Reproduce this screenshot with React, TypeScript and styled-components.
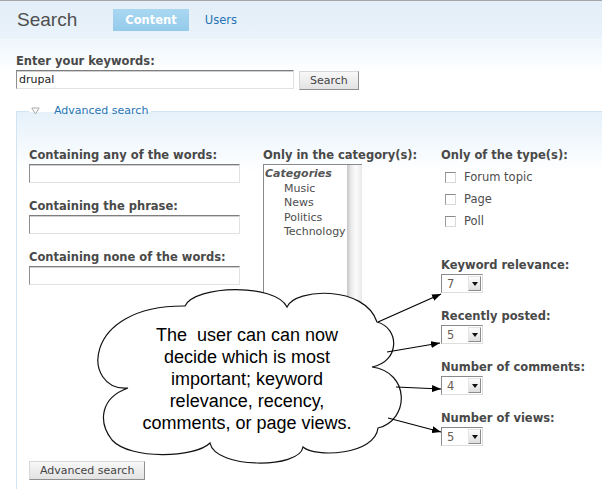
import React from 'react';
import styled, { createGlobalStyle, css } from 'styled-components';

const GlobalStyle = createGlobalStyle`
  html, body {
    margin: 0;
    padding: 0;
    background: #fff;
  }

  body {
    font-family: "DejaVu Sans", Verdana, sans-serif;
    overflow: hidden;
  }
`;

const Page = styled.div`
  position: relative;
  width: 602px;
  height: 489px;
  overflow: hidden;
  background: #fff;
  color: #494949;
`;

const Header = styled.header`
  display: flex;
  align-items: center;
  height: 38px;
  padding-left: 17px;
  border-top: 1px solid #a5a5a5;
  border-bottom: 1px solid #f4f9fd;
  background: linear-gradient(#e3eef8, #eaf3fb);
`;

const Title = styled.h1`
  margin: 0 36px 0 0;
  font: normal 19px/22px "Liberation Sans", Arial, sans-serif;
  color: #4f4f4f;
`;

const Tab = styled.a<{ $active?: boolean }>`
  display: block;
  height: 22px;
  line-height: 22px;
  padding: 0 12px;
  margin-right: 4px;
  font-size: 11.5px;
  text-decoration: none;

  ${(p) =>
    p.$active
      ? css`
          background: linear-gradient(#a9d7f1, #94cbeb);
          color: #fff;
          font-weight: bold;
        `
      : css`
          color: #2774b5;
        `}
`;

const SearchForm = styled.div`
  padding: 14px 0 0 16px;
  background: linear-gradient(#eef6fc, #fff 32px);
`;

const Label = styled.div`
  font-size: 11.5px;
  line-height: 14px;
  font-weight: bold;
  color: #494949;
  white-space: nowrap;
  margin-bottom: 2px;
`;

const Field = styled.div`
  display: flex;
  flex-direction: column;
  align-items: flex-start;
  margin-bottom: 16px;
`;

const KeywordRow = styled.div`
  display: flex;
  align-items: flex-start;
  gap: 5px;
`;

const TextInput = styled.input<{ $width: number }>`
  box-sizing: border-box;
  width: ${(p) => p.$width}px;
  height: 19px;
  margin: 0;
  padding: 0 2px;
  border: 1px solid #e2e2e2;
  border-top-color: #7e7e7e;
  border-left-color: #8e8e8e;
  box-shadow: inset 0 1px 0 #cfcfcf;
  background: #fff;
  font: 11px "DejaVu Sans", Verdana, sans-serif;
  color: #222;
  outline: none;
`;

const Button = styled.button`
  box-sizing: border-box;
  height: 19px;
  padding: 0 10px;
  margin: 1px 0 0;
  border: 1px solid #d8d8d8;
  border-right-color: #8f8f8f;
  border-bottom-color: #8f8f8f;
  background: linear-gradient(#f8f8f8, #e2e2e2);
  font: 11px/17px "DejaVu Sans", Verdana, sans-serif;
  color: #444;
`;

const Fieldset = styled.fieldset`
  margin: 14px 0 0 16px;
  padding: 30px 0 30px 12px;
  min-width: 0;
  border: 0;
  border-top: 1px solid #d2e4f2;
  border-left: 1px solid #d2e4f2;
  background: linear-gradient(#e5f1fa, #fff 60px);
`;

const Legend = styled.legend`
  display: flex;
  align-items: center;
  gap: 14px;
  padding: 0 3px 0 2px;
  font-size: 11px;
  line-height: 14px;
  color: #2774b5;
`;

const Columns = styled.div`
  display: grid;
  grid-template-columns: 234px 178px 1fr;
  align-items: start;
`;

const Column = styled.div`
  display: flex;
  flex-direction: column;
  align-items: flex-start;
`;

const ListBox = styled.div`
  box-sizing: border-box;
  display: flex;
  width: 99px;
  height: 170px;
  border-top: 1px solid #8a8a8a;
  border-left: 1px solid #8a8a8a;
  background: #fff;
`;

const ListOptions = styled.div`
  flex: 1;
  padding-top: 2px;
  font-size: 11px;
  line-height: 14.5px;
  color: #4d4d4d;
  overflow: hidden;
  white-space: nowrap;
`;

const ListOption = styled.div<{ $group?: boolean }>`
  padding-left: ${(p) => (p.$group ? 1 : 20)}px;
  ${(p) =>
    p.$group &&
    css`
      font-style: italic;
      font-weight: bold;
      color: #555;
    `}
`;

const ScrollTrack = styled.div`
  width: 15px;
  flex: none;
  background: linear-gradient(to right, #c6c6c6, #ececec 30%, #fbfbfb 60%, #e9e9e9);
`;

const CheckList = styled.div`
  display: flex;
  flex-direction: column;
  margin: 2px 0 26px;
`;

const CheckRow = styled.label`
  display: flex;
  align-items: center;
  gap: 8px;
  height: 22px;
  padding-left: 4px;
  font-size: 11.5px;
  color: #4d4d4d;
`;

const CheckBox = styled.span`
  box-sizing: border-box;
  width: 11px;
  height: 11px;
  border: 1px solid #d9d9d9;
  border-top-color: #8a8a8a;
  border-left-color: #9a9a9a;
  background: #fff;
`;

const Select = styled.div`
  box-sizing: border-box;
  display: flex;
  align-items: center;
  justify-content: space-between;
  width: 42px;
  height: 19px;
  padding-left: 5px;
  border: 1px solid #dedede;
  border-top-color: #8a8a8a;
  border-left-color: #8a8a8a;
  background: #fff;
  font-size: 11.5px;
  color: #6b5c50;
`;

const SelectButton = styled.span`
  box-sizing: border-box;
  display: flex;
  align-items: center;
  justify-content: center;
  width: 13px;
  height: 15px;
  margin-right: 1px;
  border: 1px solid #e4e4e4;
  border-right-color: #8c8c8c;
  border-bottom-color: #8c8c8c;
  background: linear-gradient(#fdfdfd, #dedede);

  &::after {
    content: '';
    border-left: 3.5px solid transparent;
    border-right: 3.5px solid transparent;
    border-top: 4px solid #111;
  }
`;

const ButtonRow = styled.div`
  margin-top: -3px;
`;

const Overlay = styled.svg`
  position: absolute;
  top: 0;
  left: 0;
  pointer-events: none;
`;

const CloudText = styled.div`
  position: absolute;
  left: 127px;
  top: 324px;
  width: 240px;
  font: 18px/22px "Liberation Sans", Arial, Helvetica, sans-serif;
  color: #000;
  text-align: center;
`;

const CloudLine = styled.div`
  white-space: pre;
`;

const categories = ['Music', 'News', 'Politics', 'Technology'];
const types = ['Forum topic', 'Page', 'Poll'];
const rankings = [
  { label: 'Keyword relevance:', value: '7' },
  { label: 'Recently posted:', value: '5' },
  { label: 'Number of comments:', value: '4' },
  { label: 'Number of views:', value: '5' },
];

const cloudLines = ['The  user can can now', 'decide which is most', 'important; keyword', 'relevance, recency,', 'comments, or page views.'];

const arrows = [
  [378, 322, 441, 294],
  [387, 352, 440, 343],
  [396, 387, 441, 389],
  [388, 418, 441, 432],
];

const cloudPath =
  'M128,388 C82,392 80,305 185,306 C195,285 275,283 287,307 C295,288 365,285 377,322 ' +
  'C400,328 400,362 372,367 C410,372 410,420 378,428 C375,455 315,458 303,447 ' +
  'C300,469 215,469 210,443 C195,458 130,460 112,440 C98,422 100,398 128,388 Z';

export default function App() {
  return (
    <>
      <GlobalStyle />
      <Page>
        <Header>
          <Title>Search</Title>
          <Tab $active href="#">
            Content
          </Tab>
          <Tab href="#">Users</Tab>
        </Header>

        <SearchForm>
          <Label>Enter your keywords:</Label>
          <KeywordRow>
            <TextInput $width={278} value="drupal" readOnly />
            <Button>Search</Button>
          </KeywordRow>
        </SearchForm>

        <Fieldset>
          <Legend>
            <svg width="9" height="8" viewBox="0 0 9 8">
              <path d="M0.8 1 H8.2 L4.5 7 Z" fill="#fff" stroke="#a9a9a9" strokeWidth="1" />
            </svg>
            Advanced search
          </Legend>

          <Columns>
            <Column>
              <Field>
                <Label>Containing any of the words:</Label>
                <TextInput $width={211} readOnly />
              </Field>
              <Field>
                <Label>Containing the phrase:</Label>
                <TextInput $width={211} readOnly />
              </Field>
              <Field>
                <Label>Containing none of the words:</Label>
                <TextInput $width={211} readOnly />
              </Field>
            </Column>

            <Column>
              <Label>Only in the category(s):</Label>
              <ListBox>
                <ListOptions>
                  <ListOption $group>Categories</ListOption>
                  {categories.map((c) => (
                    <ListOption key={c}>{c}</ListOption>
                  ))}
                </ListOptions>
                <ScrollTrack />
              </ListBox>
            </Column>

            <Column>
              <Label>Only of the type(s):</Label>
              <CheckList>
                {types.map((t) => (
                  <CheckRow key={t}>
                    <CheckBox />
                    {t}
                  </CheckRow>
                ))}
              </CheckList>
              {rankings.map((r) => (
                <Field key={r.label}>
                  <Label>{r.label}</Label>
                  <Select>
                    {r.value}
                    <SelectButton />
                  </Select>
                </Field>
              ))}
            </Column>
          </Columns>

          <ButtonRow>
            <Button>Advanced search</Button>
          </ButtonRow>
        </Fieldset>

        <Overlay width="602" height="489" viewBox="0 0 602 489">
          <defs>
            <marker id="head" markerWidth="9" markerHeight="7" refX="9" refY="3.5" orient="auto" markerUnits="userSpaceOnUse">
              <path d="M0,0 L9,3.5 L0,7 Z" fill="#000" />
            </marker>
          </defs>
          <path d={cloudPath} fill="#fff" stroke="#111" strokeWidth="1.2" />
          {arrows.map(([x1, y1, x2, y2], i) => (
            <line key={i} x1={x1} y1={y1} x2={x2} y2={y2} stroke="#000" strokeWidth="1.1" markerEnd="url(#head)" />
          ))}
        </Overlay>

        <CloudText>
          {cloudLines.map((l) => (
            <CloudLine key={l}>{l}</CloudLine>
          ))}
        </CloudText>
      </Page>
    </>
  );
}
